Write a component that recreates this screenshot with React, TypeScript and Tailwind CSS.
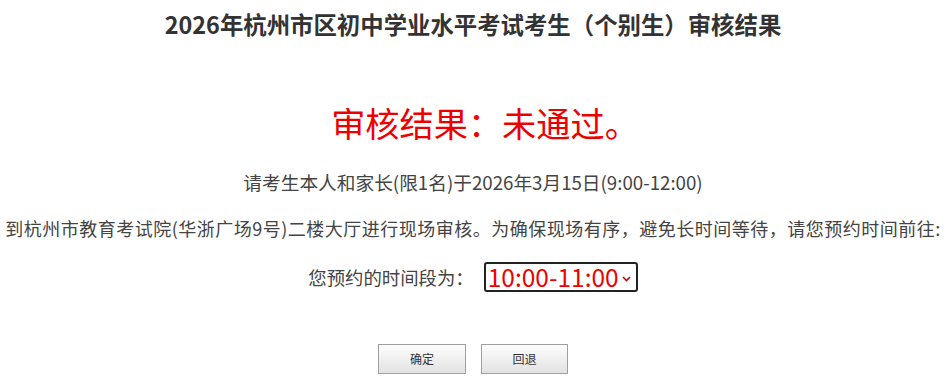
export default function App() {
  return (
    <div
      className="w-[946px] h-[386px] bg-white text-[#444] flex flex-col items-center overflow-hidden"
      style={{ fontFamily: '"Microsoft YaHei", "Noto Sans CJK SC", "Noto Sans", sans-serif' }}
    >
      {/* Title */}
      <h1 className="mt-[8px] text-[23.4px] leading-[32px] font-bold text-[#333]">
        2026年杭州市区初中学业水平考试考生（个别生）审核结果
      </h1>

      {/* Result */}
      <div className="mt-[60px] pl-[24px] text-[34.2px] leading-[44px] text-[#ee0000]">审核结果：未通过。</div>

      <p className="mt-[24px] text-[18.7px] leading-[28px] whitespace-nowrap">
        请考生本人和家长(限1名)于2026年3月15日(9:00-12:00)
      </p>
      <p className="mt-[18px] text-[18px] leading-[28px] whitespace-nowrap tracking-[0.5px]">
        到杭州市教育考试院(华浙广场9号)二楼大厅进行现场审核。为确保现场有序，避免长时间等待，请您预约时间前往:
      </p>

      {/* Time slot */}
      <div className="mt-[20px] flex items-center gap-[10px]">
        <span className="text-[18.4px] leading-[28px]">您预约的时间段为：</span>
        <div className="w-[154px] h-[30px] border-2 border-[#222] rounded-[3px] flex items-center justify-between pl-[2px] pr-[5px]">
          <span className="text-[24.5px] leading-[26px] text-[#ee0000]">10:00-11:00</span>
          <svg width="9" height="6" viewBox="0 0 9 6" className="mt-[4px]">
            <path d="M1 1 L4.5 4.5 L8 1" fill="none" stroke="#cc0000" strokeWidth="1.6" />
          </svg>
        </div>
      </div>

      {/* Buttons */}
      <div className="mt-[52px] flex gap-[15px]">
        <button className="w-[88px] h-[30px] border border-[#a0a0a0] bg-gradient-to-b from-[#fdfdfd] to-[#e2e2e2] text-[12px] text-[#333]">
          确定
        </button>
        <button className="w-[87px] h-[30px] border border-[#a0a0a0] bg-gradient-to-b from-[#fdfdfd] to-[#e2e2e2] text-[12px] text-[#333]">
          回退
        </button>
      </div>
    </div>
  )
}
